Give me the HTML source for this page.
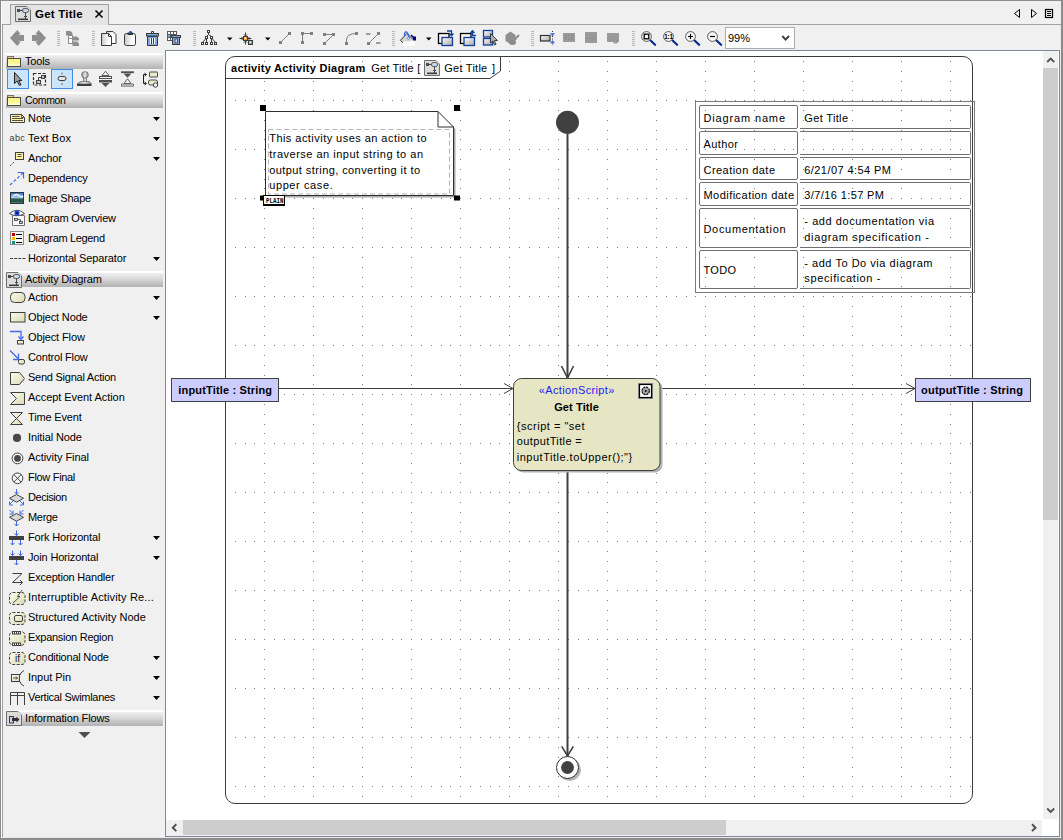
<!DOCTYPE html>
<html><head><meta charset="utf-8"><title>Get Title</title>
<style>
html,body{margin:0;padding:0;}
body{width:1063px;height:840px;overflow:hidden;background:#f0f0f0;position:relative;font-family:"Liberation Sans",sans-serif;font-size:11px;color:#000;}
.abs{position:absolute;}
.ui{font-family:"Liberation Sans",sans-serif;font-size:11px;}

.ph{position:absolute;left:6px;width:157px;height:16px;background:linear-gradient(#fff 0,#fff 2px,#efefef 2px,#dcdcdc 7px,#c4c4c4 12px,#b2b2b2 16px);}
.pt{position:absolute;font-size:11px;line-height:13px;white-space:nowrap;color:#000;}


.tabtxt{position:absolute;left:35px;top:8px;font-weight:bold;font-size:11.5px;letter-spacing:0.22px;line-height:13px;white-space:nowrap;}

</style></head><body>
<!-- window borders -->
<div class="abs" style="left:0;top:0;width:1063px;height:1px;background:#8e8e8e"></div>
<div class="abs" style="left:0;top:0;width:1px;height:840px;background:#8a8a8a"></div>
<div class="abs" style="left:1px;top:1px;width:1px;height:837px;background:#fbfbfb"></div>
<div class="abs" style="left:1061px;top:0;width:2px;height:840px;background:#8c8c8c"></div>
<div class="abs" style="left:0;top:838px;width:1063px;height:2px;background:#8c8c8c"></div>
<div class="abs" style="left:1px;top:837px;width:1060px;height:1px;background:#e8e8e8"></div>
<div class="abs" style="left:1060px;top:25px;width:1px;height:813px;background:#e8e8e8"></div>
<!-- tab content border -->
<div class="abs" style="left:2px;top:24px;width:1059px;height:1px;background:#a0a0a0"></div>
<div class="abs" style="left:2px;top:24px;width:1px;height:813px;background:#a0a0a0"></div>
<div class="abs" style="left:165px;top:836px;width:895px;height:1px;background:#7e8898"></div>
<div class="abs" style="left:1059px;top:50px;width:1px;height:787px;background:#7e8898"></div>

<div class="abs" style="left:10px;top:4px;width:99px;height:21px;background:#e5e5e5;border:1px solid #a0a0a0;border-bottom:none;box-sizing:border-box"></div>
<svg class="abs" style="left:0;top:0" width="1063" height="25" viewBox="0 0 1063 25">
<g transform="translate(15 6)">
<path d="M0.5 0.5H12L15.5 4V15.5H0.5Z" fill="#dcdcdc" stroke="#6e6e6e"/>
<path d="M12 0.5V4H15.5Z" fill="#fff" stroke="#b8b8b8" stroke-width="0.6"/>
<rect x="2" y="3" width="3" height="3" fill="#4a4a4a"/>
<path d="M5 4.5H8" stroke="#4a4a4a"/>
<rect x="7.5" y="2.5" width="6" height="4" rx="1.8" fill="#c8d6f0" stroke="#4a4a4a" stroke-width="0.9"/>
<path d="M10.5 6.5V13M9 10.5H12" stroke="#4a4a4a"/>
<rect x="3" y="12.5" width="10" height="1.6" fill="#3c3c3c"/>
</g>
<path d="M95.5 10.5L102.5 17.5M102.5 10.5L95.5 17.5" stroke="#000" stroke-width="1.5"/>
<path d="M1019.5 9.5V17.5L1014.5 13.5Z" fill="none" stroke="#000" stroke-width="1"/>
<path d="M1031.5 9.5V17.5L1036.5 13.5Z" fill="none" stroke="#000" stroke-width="1"/>
<rect x="1045.5" y="9.5" width="7" height="8" fill="none" stroke="#000" stroke-width="1.2"/>
<path d="M1047 11.5H1051M1047 13.5H1051M1047 15.5H1051" stroke="#000" stroke-width="1"/>
</svg>
<div class="tabtxt">Get Title</div>


<svg class="abs" style="left:0;top:0" width="1063" height="51" viewBox="0 0 1063 51">
<!-- back / forward -->
<path d="M10 38L17.3 30L20.5 34L19.3 35H24V41H19.3L20.5 42L17.3 46Z" fill="#8e8e8e"/><path d="M19 35.2L21.3 33.5M19 40.8L21.3 42.5" stroke="#d8d8d8" stroke-width="0.9"/>
<path d="M46 38L38.7 30L35.5 34L36.7 35H32V41H36.7L35.5 42L38.7 46Z" fill="#8e8e8e"/><path d="M37 35.2L34.7 33.5M37 40.8L34.7 42.5" stroke="#d8d8d8" stroke-width="0.9"/>
<rect x="57" y="31" width="3" height="1" fill="#b8b8b8"/><rect x="57" y="33" width="3" height="1" fill="#b8b8b8"/><rect x="57" y="35" width="3" height="1" fill="#b8b8b8"/><rect x="57" y="37" width="3" height="1" fill="#b8b8b8"/><rect x="57" y="39" width="3" height="1" fill="#b8b8b8"/><rect x="57" y="41" width="3" height="1" fill="#b8b8b8"/><rect x="57" y="43" width="3" height="1" fill="#b8b8b8"/><rect x="57" y="45" width="3" height="1" fill="#b8b8b8"/>
<!-- tree icon -->
<path d="M66 31H70.5L72.5 33V35.5H66ZM72.5 36.5H77L79 38.5V40.5H72.5ZM72.5 41.5H77L79 43.5V46H72.5Z" fill="#8e8e8e"/>
<rect x="68.5" y="35.5" width="4" height="8" fill="#fff" stroke="#8e8e8e"/>
<path d="M68.5 38.5H72.5" stroke="#8e8e8e"/>
<rect x="92" y="31" width="3" height="1" fill="#b8b8b8"/><rect x="92" y="33" width="3" height="1" fill="#b8b8b8"/><rect x="92" y="35" width="3" height="1" fill="#b8b8b8"/><rect x="92" y="37" width="3" height="1" fill="#b8b8b8"/><rect x="92" y="39" width="3" height="1" fill="#b8b8b8"/><rect x="92" y="41" width="3" height="1" fill="#b8b8b8"/><rect x="92" y="43" width="3" height="1" fill="#b8b8b8"/><rect x="92" y="45" width="3" height="1" fill="#b8b8b8"/>
<!-- copy -->
<defs><linearGradient id="pg" x1="0" x2="1"><stop offset="0" stop-color="#c8c8c8"/><stop offset="0.7" stop-color="#fff"/></linearGradient>
<linearGradient id="pg2" x1="0" x2="1" y1="0" y2="1"><stop offset="0" stop-color="#fff"/><stop offset="1" stop-color="#a8a8a8"/></linearGradient></defs>
<path d="M106.5 31.5H113L116 34.5V43.5H106.5Z" fill="url(#pg)" stroke="#3c3c3c"/>
<path d="M101.5 33.5H108.5L111.5 36.5V45.5H101.5Z" fill="url(#pg)" stroke="#3c3c3c"/>
<path d="M108.5 33.5V36.5H111.5" fill="none" stroke="#3c3c3c"/>
<!-- paste -->
<rect x="124.5" y="33.5" width="11" height="12" rx="2" fill="url(#pg)" stroke="#3c3c3c"/>
<rect x="127.5" y="32.6" width="5.5" height="2.4" fill="#303840"/><path d="M128.6 33L129.7 31H131.3L132.4 33Z" fill="#2a5ab4"/>
<!-- trash -->
<path d="M151.5 33V31.5H153.5V33" stroke="#3c3c3c" fill="none"/>
<rect x="146.5" y="33.5" width="12" height="2.5" fill="#7aa7e6" stroke="#3c3c3c"/>
<path d="M147.5 36.5H157.5V45.5H147.5Z" fill="#7aa7e6" stroke="#3c3c3c"/>
<path d="M150.5 38V44M152.5 38V44M154.5 38V44" stroke="#fff" stroke-width="1"/>
<path d="M151.5 38V44M153.5 38V44" stroke="#3c3c3c" stroke-width="1"/>
<!-- table trash -->
<rect x="167.5" y="31.5" width="9" height="9" fill="#fff" stroke="#5a5a5a"/>
<path d="M167.5 34.5H176.5M167.5 37.5H176.5M170.5 31.5V40.5M173.5 31.5V40.5" stroke="#5a5a5a"/>
<rect x="168" y="35" width="2" height="2" fill="#7aa7e6"/>
<rect x="171.5" y="35.5" width="9" height="2" fill="#7aa7e6" stroke="#3c3c3c"/>
<rect x="172.5" y="37.5" width="7" height="7" fill="#7aa7e6" stroke="#3c3c3c"/>
<rect x="175" y="39" width="2.5" height="4" fill="#d8d8e8" stroke="#3c3c3c" stroke-width="0.8"/>
<rect x="193" y="31" width="3" height="1" fill="#b8b8b8"/><rect x="193" y="33" width="3" height="1" fill="#b8b8b8"/><rect x="193" y="35" width="3" height="1" fill="#b8b8b8"/><rect x="193" y="37" width="3" height="1" fill="#b8b8b8"/><rect x="193" y="39" width="3" height="1" fill="#b8b8b8"/><rect x="193" y="41" width="3" height="1" fill="#b8b8b8"/><rect x="193" y="43" width="3" height="1" fill="#b8b8b8"/><rect x="193" y="45" width="3" height="1" fill="#b8b8b8"/>
<!-- layout tree -->
<g fill="#fff" stroke="#3c3c3c">
<path d="M208.5 33V34.5L206.5 36.5M208.5 34.5L211.5 36.5M206.5 39V42M211.5 39V42M205.5 39L202.5 42.5M212.5 39L215.5 42.5" fill="none"/>
<rect x="207.5" y="30.5" width="2" height="2"/>
<rect x="205.5" y="36.5" width="2" height="2"/><rect x="210.5" y="36.5" width="2" height="2"/>
<rect x="201.5" y="42.5" width="2" height="2"/><rect x="205.5" y="42.5" width="2" height="2"/><rect x="210.5" y="42.5" width="2" height="2"/><rect x="214.5" y="42.5" width="2" height="2"/>
</g>
<path d="M227 37.5H232.5L229.75 40.5Z" fill="#000"/>
<!-- quick diagram layout -->
<path d="M239.5 38.5H243M241.5 37L243 38.5L241.5 40M245.5 32.5V36M244 34.5L245.5 36L247 34.5M245.5 44.5V41M244 42.5L245.5 41L247 42.5M251.5 38.5H248M249.5 37L248 38.5L249.5 40" stroke="#3c3c3c" fill="none"/>
<rect x="243.5" y="36.5" width="4" height="4" fill="#f0a030" stroke="#3c3c3c"/>
<rect x="248.5" y="40.5" width="4" height="4" fill="#50c060" stroke="#3c3c3c"/>
<rect x="244.5" y="37.5" width="1.5" height="1.5" fill="#fff"/>
<rect x="249.5" y="41.5" width="1.5" height="1.5" fill="#fff"/>
<path d="M265 37.5H270.5L267.75 40.5Z" fill="#000"/>
<!-- path style icons (disabled) -->
<g stroke="#808080" fill="none" stroke-width="1">
<path d="M280.5 42.5L289.5 33.5"/>
<path d="M302.5 42.5V33.5H311.5"/>
<path d="M324.5 34.5H333.5L324.5 43.5"/>
<path d="M346.5 43.5V40Q346.5 33.5 356.5 33.5"/>
<path d="M368.5 43.5L378.5 33.5"/>
<path d="M366 34H370.5M376 43H380.5" stroke-width="1.5"/>
</g>
<rect x="279" y="41" width="3" height="3" fill="#808080"/><rect x="288" y="32" width="3" height="3" fill="#808080"/>
<rect x="301" y="32" width="3" height="3" fill="#808080"/><rect x="310" y="32" width="3" height="3" fill="#808080"/><rect x="301" y="41" width="3" height="3" fill="#808080"/>
<rect x="323" y="33" width="3" height="3" fill="#808080"/><rect x="332" y="33" width="3" height="3" fill="#808080"/><rect x="323" y="42" width="3" height="3" fill="#808080"/>
<rect x="355" y="32" width="3" height="3" fill="#808080"/><rect x="345" y="42" width="3" height="3" fill="#808080"/>
<rect x="377" y="32" width="3" height="3" fill="#808080"/><rect x="367" y="42" width="3" height="3" fill="#808080"/>
<rect x="392" y="31" width="3" height="1" fill="#b8b8b8"/><rect x="392" y="33" width="3" height="1" fill="#b8b8b8"/><rect x="392" y="35" width="3" height="1" fill="#b8b8b8"/><rect x="392" y="37" width="3" height="1" fill="#b8b8b8"/><rect x="392" y="39" width="3" height="1" fill="#b8b8b8"/><rect x="392" y="41" width="3" height="1" fill="#b8b8b8"/><rect x="392" y="43" width="3" height="1" fill="#b8b8b8"/><rect x="392" y="45" width="3" height="1" fill="#b8b8b8"/>
<!-- fill bucket -->
<path d="M400.5 40.5L407 33.5L413 39.5L408 42.5L403 43Z" fill="#d4d4d4"/>
<rect x="403" y="41.5" width="12" height="4.5" fill="#fff"/>
<path d="M403 42.8L400.4 40.3L407 33.4L413 39.5" stroke="#303030" fill="none"/>
<path d="M404.5 36V33.5Q405.8 30.3 407.5 33L408.5 35V37.5" stroke="#3a64e8" stroke-width="1.3" fill="none"/>
<rect x="407.7" y="37.3" width="1.8" height="1.8" fill="#fff" stroke="#3a64e8" stroke-width="0.8" transform="rotate(45 408.6 38.2)"/>
<path d="M411 35L414 38" stroke="#000080" stroke-width="1.6"/><rect x="413" y="36.5" width="3" height="4" fill="#000080"/>
<path d="M426 37.5H431.5L428.75 40.5Z" fill="#000"/>
<!-- send to back -->
<rect x="438.5" y="33.5" width="10.5" height="10" fill="#f4f4f4" stroke="#000" stroke-width="1.3"/>
<rect x="442" y="37.5" width="10.5" height="8" fill="url(#pg2)" stroke="#10409c" stroke-width="1.3"/>
<path d="M447 31H451.5V35.5M449.5 33.5L451.5 35.8L453.5 33.5" fill="none" stroke="#10409c" stroke-width="1.3"/>
<!-- bring to front -->
<rect x="460.5" y="33.5" width="10.5" height="10" fill="#f4f4f4" stroke="#000" stroke-width="1.3"/>
<rect x="464" y="37.5" width="10.5" height="8" fill="url(#pg2)" stroke="#10409c" stroke-width="1.3"/>
<path d="M476 35.5H472.5V31M470.5 33L472.5 30.7L474.5 33" fill="none" stroke="#10409c" stroke-width="1.3"/>
<!-- select all of type -->
<rect x="483.5" y="30.5" width="9" height="6.5" fill="url(#pg2)" stroke="#10409c" stroke-width="1.3"/>
<rect x="483.5" y="38.5" width="9" height="6.5" fill="url(#pg2)" stroke="#10409c" stroke-width="1.3"/>
<path d="M490.5 33.5V43L492.8 41L494.5 45L496 44.3L494.3 40.5H497.5Z" fill="#b0b0b0" stroke="#303030" stroke-width="0.9"/>
<!-- disabled paint -->
<path d="M505.5 35L510.5 31.5L515.5 35V41L510.5 44L505.5 41Z" fill="#909090"/>
<path d="M519 35L513 41.5" stroke="#909090" stroke-width="2"/>
<ellipse cx="512.5" cy="42.5" rx="3.5" ry="2.5" fill="#8a8a8a"/>
<rect x="531" y="31" width="3" height="1" fill="#b8b8b8"/><rect x="531" y="33" width="3" height="1" fill="#b8b8b8"/><rect x="531" y="35" width="3" height="1" fill="#b8b8b8"/><rect x="531" y="37" width="3" height="1" fill="#b8b8b8"/><rect x="531" y="39" width="3" height="1" fill="#b8b8b8"/><rect x="531" y="41" width="3" height="1" fill="#b8b8b8"/><rect x="531" y="43" width="3" height="1" fill="#b8b8b8"/><rect x="531" y="45" width="3" height="1" fill="#b8b8b8"/>
<!-- make same size -->
<rect x="540.5" y="35.5" width="9.5" height="5.5" fill="url(#pg2)" stroke="#303030" stroke-width="1.2"/>
<path d="M552.5 31V46" stroke="#303030" stroke-dasharray="1 1.5"/>
<path d="M550.5 33.5H554.5L552.5 36ZM550.5 43H554.5L552.5 40.5Z" fill="#3a6ee8" stroke="#3a6ee8" stroke-width="0.6"/>
<rect x="563" y="33" width="12" height="9" fill="#9a9a9a"/>
<path d="M565 35.5H573M565 37.5H573M565 39.5H573" stroke="#8a8a8a" stroke-dasharray="2 1"/>
<rect x="585" y="32" width="12" height="11" fill="#9a9a9a"/>
<path d="M586 38.5H596" stroke="#8e8e8e"/>
<rect x="607" y="33" width="12" height="9" fill="#9a9a9a"/>
<rect x="614" y="40" width="3" height="3" fill="#a8a8a8" stroke="#8a8a8a" stroke-width="0.8"/>
<rect x="632" y="31" width="3" height="1" fill="#b8b8b8"/><rect x="632" y="33" width="3" height="1" fill="#b8b8b8"/><rect x="632" y="35" width="3" height="1" fill="#b8b8b8"/><rect x="632" y="37" width="3" height="1" fill="#b8b8b8"/><rect x="632" y="39" width="3" height="1" fill="#b8b8b8"/><rect x="632" y="41" width="3" height="1" fill="#b8b8b8"/><rect x="632" y="43" width="3" height="1" fill="#b8b8b8"/><rect x="632" y="45" width="3" height="1" fill="#b8b8b8"/>
<!-- zoom icons -->
<path d="M650.3 40.3L655.1 44.8" stroke="#0a2a88" stroke-width="2.2" stroke-linecap="round"/>
<circle cx="646.5" cy="36.5" r="4.9" fill="#f6f6f6" stroke="#585858" stroke-width="1"/><rect x="644.2" y="34.2" width="4.6" height="4.6" fill="none" stroke="#000" stroke-width="1.3"/>
<path d="M672.3 40.3L677.1 44.8" stroke="#0a2a88" stroke-width="2.2" stroke-linecap="round"/>
<circle cx="668.5" cy="36.5" r="4.9" fill="#f6f6f6" stroke="#585858" stroke-width="1"/><text x="668.5" y="38.8" font-size="6.5" font-weight="bold" text-anchor="middle" font-family="Liberation Sans, sans-serif" letter-spacing="-0.3">1:1</text>
<path d="M694.3 40.3L699.1 44.8" stroke="#0a2a88" stroke-width="2.2" stroke-linecap="round"/>
<circle cx="690.5" cy="36.5" r="4.9" fill="#f6f6f6" stroke="#585858" stroke-width="1"/><path d="M688 36.5H693M690.5 34V39" stroke="#000" stroke-width="1.2"/>
<path d="M716.3 40.3L721.1 44.8" stroke="#0a2a88" stroke-width="2.2" stroke-linecap="round"/>
<circle cx="712.5" cy="36.5" r="4.9" fill="#f6f6f6" stroke="#585858" stroke-width="1"/><path d="M710 36.5H715" stroke="#000" stroke-width="1.2"/>
<!-- combo -->
<rect x="725.5" y="27.5" width="69" height="21" fill="#fff" stroke="#adadad"/>
<path d="M782.3 36L785.6 39.6L789 36" fill="none" stroke="#404040" stroke-width="2"/>
</svg>
<div class="abs ui" style="left:728px;top:32px;font-size:11px;line-height:13px">99%</div>

<div class="ph" style="top:53px"></div><div class="pt" style="left:25px;top:55px;letter-spacing:-0.198px">Tools</div><div class="ph" style="top:92px"></div><div class="pt" style="left:25px;top:94px;font-size:10.5px;letter-spacing:-0.330px">Common</div><div class="ph" style="top:271px"></div><div class="pt" style="left:25px;top:273px;letter-spacing:-0.173px">Activity Diagram</div><div class="ph" style="top:710px"></div><div class="pt" style="left:25px;top:712px;letter-spacing:-0.124px">Information Flows</div><div class="pt" style="left:28px;top:112px;letter-spacing:-0.062px">Note</div><div class="pt" style="left:28px;top:132px;letter-spacing:0.102px">Text Box</div><div class="pt" style="left:28px;top:152px;letter-spacing:-0.210px">Anchor</div><div class="pt" style="left:28px;top:172px;letter-spacing:-0.218px">Dependency</div><div class="pt" style="left:28px;top:192px;letter-spacing:-0.222px">Image Shape</div><div class="pt" style="left:28px;top:212px;letter-spacing:-0.161px">Diagram Overview</div><div class="pt" style="left:28px;top:232px;letter-spacing:-0.332px">Diagram Legend</div><div class="pt" style="left:28px;top:252px;letter-spacing:-0.135px">Horizontal Separator</div><div class="pt" style="left:28px;top:291px;letter-spacing:-0.163px">Action</div><div class="pt" style="left:28px;top:311px;letter-spacing:-0.141px">Object Node</div><div class="pt" style="left:28px;top:331px;letter-spacing:-0.125px">Object Flow</div><div class="pt" style="left:28px;top:351px;letter-spacing:-0.179px">Control Flow</div><div class="pt" style="left:28px;top:371px;letter-spacing:-0.248px">Send Signal Action</div><div class="pt" style="left:28px;top:391px;letter-spacing:-0.060px">Accept Event Action</div><div class="pt" style="left:28px;top:411px;letter-spacing:-0.163px">Time Event</div><div class="pt" style="left:28px;top:431px;letter-spacing:-0.096px">Initial Node</div><div class="pt" style="left:28px;top:451px;letter-spacing:-0.054px">Activity Final</div><div class="pt" style="left:28px;top:471px;letter-spacing:-0.312px">Flow Final</div><div class="pt" style="left:28px;top:491px;letter-spacing:-0.436px">Decision</div><div class="pt" style="left:28px;top:511px;letter-spacing:-0.317px">Merge</div><div class="pt" style="left:28px;top:531px;letter-spacing:-0.159px">Fork Horizontal</div><div class="pt" style="left:28px;top:551px;letter-spacing:-0.171px">Join Horizontal</div><div class="pt" style="left:28px;top:571px;letter-spacing:-0.199px">Exception Handler</div><div class="pt" style="left:28px;top:591px;letter-spacing:0.151px">Interruptible Activity Re...</div><div class="pt" style="left:28px;top:611px;letter-spacing:0.021px">Structured Activity Node</div><div class="pt" style="left:28px;top:631px;letter-spacing:-0.269px">Expansion Region</div><div class="pt" style="left:28px;top:651px;letter-spacing:-0.231px">Conditional Node</div><div class="pt" style="left:28px;top:671px;letter-spacing:-0.047px">Input Pin</div><div class="pt" style="left:28px;top:691px;letter-spacing:-0.296px">Vertical Swimlanes</div><svg class="abs" style="left:0;top:0" width="166" height="840" viewBox="0 0 166 840" font-family="Liberation Sans, sans-serif">
<defs><linearGradient id="fold" x1="0" y1="0" x2="0" y2="1"><stop offset="0" stop-color="#f8f27c"/><stop offset="0.5" stop-color="#faf690"/><stop offset="1" stop-color="#fffde4"/></linearGradient><linearGradient id="yf" x1="0" y1="0" x2="1" y2="1"><stop offset="0" stop-color="#fcfcf0"/><stop offset="1" stop-color="#dadab2"/></linearGradient></defs>
<rect x="7.5" y="69.5" width="21" height="19" fill="#cce4f7" stroke="#3c8ce8"/>
<rect x="51.5" y="69.5" width="21" height="19" fill="#cce4f7" stroke="#3c8ce8"/>
<path d="M14.5 72.5V83.5L17 81L19.5 85.5L21 84.7L18.7 80.5H21.8Z" fill="#a0a0a0" stroke="#202020" stroke-width="1"/>
<rect x="33.5" y="73.5" width="12" height="11.5" fill="none" stroke="#303030" stroke-width="1.2" stroke-dasharray="3 1.5"/>
<rect x="41.5" y="75.5" width="3" height="3" fill="#c8c8c8" stroke="#404040"/><rect x="36.5" y="80.5" width="4" height="3" fill="#c8c8c8" stroke="#404040"/><path d="M38.5 80.5V77.5H41.5" stroke="#404040" fill="none"/>
<path d="M62 72.5V85" stroke="#707070" stroke-dasharray="2 1.5"/>
<rect x="58" y="76.5" width="8" height="4" rx="2" fill="#e4e4e4" stroke="#404040"/>
<defs><linearGradient id="stg" x1="0" x2="1"><stop offset="0" stop-color="#8a8a8a"/><stop offset="0.5" stop-color="#e8e8e8"/><stop offset="1" stop-color="#8a8a8a"/></linearGradient></defs>
<rect x="83.3" y="76" width="3.4" height="6" fill="url(#stg)" stroke="#686868" stroke-width="0.5"/><rect x="81.8" y="71.8" width="6.4" height="6" rx="2.4" fill="url(#stg)" stroke="#585858" stroke-width="0.7"/><path d="M80.5 81.5H89.5L91.5 84H77L80.5 81.5Z" fill="url(#stg)" stroke="#585858" stroke-width="0.6"/>
<rect x="77" y="84" width="14.5" height="2" fill="#404040"/>
<rect x="99.5" y="76.5" width="12" height="2" fill="#f4f4f4" stroke="#505050"/><rect x="99.5" y="80.5" width="12" height="1.5" fill="#505050" stroke="#505050"/>
<path d="M105.5 71.2L102 75.5H109Z" fill="#f4f4f4" stroke="#505050" stroke-width="0.9"/><path d="M105.5 87L101.5 83H109.5Z" fill="#505050"/>
<rect x="121" y="71.3" width="13" height="1.8" fill="#505050"/><path d="M123.5 73.5H131.5L127.5 77.8Z" fill="#505050"/>
<path d="M127.5 78.8L124 83.5H131Z" fill="#f4f4f4" stroke="#505050" stroke-width="0.9"/><rect x="121.5" y="84" width="12" height="2.2" fill="#c8c8c8" stroke="#707070" stroke-width="0.8"/>
<rect x="149.5" y="72" width="8" height="5" rx="0.5" fill="#ecebc8" stroke="#484848"/><rect x="148.5" y="80" width="9" height="5" rx="2" fill="#ecebc8" stroke="#484848"/>
<path d="M146 74.5H143.5V83.5H146M144.5 73L146.5 74.5L144.5 76M144.5 82L146.5 83.5L144.5 85" stroke="#202020" fill="none"/>
<circle cx="155.5" cy="85" r="2.2" fill="#f4f4f4" stroke="#404040"/>
<path d="M78.5 732H90.5L84.5 738Z" fill="#505050"/><rect x="7.5" y="56.5" width="6" height="2.5" fill="#f6c878" stroke="#747474"/><rect x="7.5" y="58.5" width="13" height="8" fill="url(#fold)" stroke="#4c4c4c"/><rect x="7.5" y="95.5" width="6" height="2.5" fill="#f6c878" stroke="#747474"/><rect x="7.5" y="97.5" width="13" height="8" fill="url(#fold)" stroke="#4c4c4c"/><g transform="translate(6 272)">
<path d="M0.5 0.5H12L15.5 4V15.5H0.5Z" fill="#dcdcdc" stroke="#6e6e6e"/>
<path d="M12 0.5V4H15.5Z" fill="#fff" stroke="#b8b8b8" stroke-width="0.6"/>
<rect x="2" y="3" width="3" height="3" fill="#4a4a4a"/>
<path d="M5 4.5H8" stroke="#4a4a4a"/>
<rect x="7.5" y="2.5" width="6" height="4" rx="1.8" fill="#c8d6f0" stroke="#4a4a4a" stroke-width="0.9"/>
<path d="M10.5 6.5V13M9 10.5H12" stroke="#4a4a4a"/>
<rect x="3" y="12.5" width="10" height="1.6" fill="#3c3c3c"/>
</g><g transform="translate(6 711)">
<path d="M0.5 0.5H12L15.5 4V14.5H0.5Z" fill="#dcdcdc" stroke="#6e6e6e"/>
<path d="M12 0.5V4H15.5Z" fill="#fff" stroke="#b8b8b8" stroke-width="0.6"/>
<rect x="3.5" y="5.5" width="4" height="6.5" fill="#c4d2ee" stroke="#3c3c3c"/>
<path d="M6 7H10.5V5.5L13.5 8.5L10.5 11.5V10H6Z" fill="#303030"/>
</g><g transform="translate(0 108)"><path d="M10.5 6.5H21.5L24.5 9.5V14.5H10.5Z" fill="#fff3a8" stroke="#404040"/><path d="M21.5 6.5V9.5H24.5M12 8.5H19.5M12 10.5H23M12 12.5H23" stroke="#404040" fill="none" stroke-width="0.9"/></g><path d="M153 117H160L156.5 121Z" fill="#000"/><g transform="translate(0 128)"><text x="9.5" y="12.7" font-size="9" fill="#383838" letter-spacing="0.4">abc</text></g><path d="M153 137H160L156.5 141Z" fill="#000"/><g transform="translate(0 148)"><rect x="15.5" y="4.5" width="8" height="7" fill="#fff3a8" stroke="#404040"/><path d="M17.5 6.5H21.5M17.5 8.5H21.5" stroke="#404040" stroke-width="0.9"/><path d="M10 18L15 13" stroke="#404040" stroke-dasharray="2 1.5"/></g><path d="M153 157H160L156.5 161Z" fill="#000"/><g transform="translate(0 168)"><path d="M10 17L23.5 4.5" stroke="#4468e8" stroke-width="1.2" stroke-dasharray="3 2"/><path d="M17.5 4.5H23.5V10.5" stroke="#4468e8" stroke-width="1.2" fill="none"/></g><g transform="translate(0 188)"><defs><linearGradient id="sky" x1="0" y1="0" x2="0" y2="1"><stop offset="0" stop-color="#2a66c8"/><stop offset="0.45" stop-color="#a8d0f0"/><stop offset="0.6" stop-color="#2c5c50"/><stop offset="0.85" stop-color="#205038"/><stop offset="1" stop-color="#88b0e8"/></linearGradient></defs><rect x="10.5" y="4.5" width="13" height="11" fill="url(#sky)" stroke="#303030"/><path d="M13 8Q16 5.5 19 7.5T23 8" stroke="#fff" stroke-width="1.5" fill="none" opacity="0.85"/></g><g transform="translate(0 208)"><path d="M12.5 7.5H24.5V17.5H12.5Z" fill="#fafafa" stroke="#707070"/><rect x="14.5" y="10.5" width="3" height="2" fill="#e0e0e0" stroke="#303030" stroke-width="0.8"/><rect x="19.5" y="13.5" width="3" height="2" fill="#e0e0e0" stroke="#303030" stroke-width="0.8"/><path d="M17.5 11.5H20.5V13.5" stroke="#303030" fill="none" stroke-width="0.8"/><path d="M9.5 5.5Q17 -1 24.5 5.5Q17 10 9.5 5.5Z" fill="#fff" stroke="#505050"/><circle cx="17" cy="5" r="2.6" fill="#1848e0"/><circle cx="17" cy="5" r="1" fill="#101030"/></g><g transform="translate(0 228)"><rect x="10.5" y="3.5" width="13" height="13" fill="#f8f8f8" stroke="#8c8c8c"/><rect x="12" y="5" width="3" height="3" fill="#c00000"/><rect x="12" y="9" width="3" height="3" fill="#ffb400"/><rect x="12" y="13" width="3" height="3" fill="#109080"/><path d="M16 6.5H22M16 10.5H22M16 14.5H22" stroke="#000" stroke-width="1.1"/></g><g transform="translate(0 248)"><path d="M10 10.5H25.5" stroke="#404040" stroke-dasharray="3 1.15"/></g><path d="M153 257H160L156.5 261Z" fill="#000"/><g transform="translate(0 287)"><rect x="10.5" y="5.5" width="14.5" height="10" rx="4" fill="url(#yf)" stroke="#404040"/></g><path d="M153 296H160L156.5 300Z" fill="#000"/><g transform="translate(0 307)"><rect x="10.5" y="5.5" width="14.5" height="9.5" fill="url(#yf)" stroke="#404040"/></g><path d="M153 316H160L156.5 320Z" fill="#000"/><g transform="translate(0 327)"><path d="M10 4.5H21V12" stroke="#4468e8" stroke-width="1.3" fill="none"/><path d="M18.5 9.5L21 12.5L23.5 9.5" stroke="#4468e8" stroke-width="1.3" fill="none"/><rect x="17.5" y="13.5" width="6" height="3.5" fill="url(#yf)" stroke="#404040"/></g><g transform="translate(0 347)"><path d="M10 3.5L18.5 12" stroke="#4468e8" stroke-width="1.3" fill="none"/><path d="M18.5 6.5V12.5H13" stroke="#4468e8" stroke-width="1.3" fill="none"/><rect x="18.5" y="12.5" width="6" height="4.5" rx="1.5" fill="url(#yf)" stroke="#404040"/></g><g transform="translate(0 367)"><path d="M10.5 5.5H19.5L24.5 11.5L19.5 17.5H10.5Z" fill="url(#yf)" stroke="#404040"/></g><g transform="translate(0 387)"><path d="M10.5 5.5H24.5V17.5H10.5L16.5 11.5Z" fill="url(#yf)" stroke="#404040"/></g><g transform="translate(0 407)"><path d="M10.5 5.5H22.5L10.5 17.5H22.5Z" fill="url(#yf)" stroke="#404040"/></g><g transform="translate(0 427)"><circle cx="17" cy="10.9" r="4.1" fill="#484848"/></g><g transform="translate(0 447)"><circle cx="17.5" cy="11.4" r="5.4" fill="#fff" stroke="#404040"/><circle cx="17.5" cy="11.4" r="3.4" fill="#484848"/></g><g transform="translate(0 467)"><circle cx="17.5" cy="11.3" r="5.3" fill="#f8f8f8" stroke="#404040"/><path d="M13.8 7.6L21.2 15M21.2 7.6L13.8 15" stroke="#404040"/></g><g transform="translate(0 487)"><path d="M16.5 2V7M14.5 5L16.5 7L18.5 5" stroke="#4468e8" fill="none"/><path d="M9.5 11.3L16.5 7.5L23.5 11.3L16.5 15.2Z" fill="#d8d8d8" stroke="#404040"/><path d="M13 14L9.5 17.5M9.5 14.5V18H13M20 14L23.5 17.5M23.5 14.5V18H20" stroke="#4468e8" fill="none"/></g><g transform="translate(0 507)"><path d="M9.5 3L13 6.5M13 3.5V7H9.5M23.5 3L20 6.5M20 3.5V7H23.5" stroke="#4468e8" fill="none"/><path d="M9.5 10.3L16.5 6.5L23.5 10.3L16.5 14.2Z" fill="#d8d8d8" stroke="#404040"/><path d="M16.5 14V19M14.5 17L16.5 19L18.5 17" stroke="#4468e8" fill="none"/></g><g transform="translate(0 527)"><path d="M16.5 3.5V8.5M14.5 6.5L16.5 8.5L18.5 6.5" stroke="#4468e8" fill="none"/><rect x="9" y="9" width="15" height="4" fill="#404040"/><path d="M12.5 13V18M10.5 16L12.5 18L14.5 16" stroke="#4468e8" fill="none"/><path d="M20.5 13V18M18.5 16L20.5 18L22.5 16" stroke="#4468e8" fill="none"/></g><path d="M153 536H160L156.5 540Z" fill="#000"/><g transform="translate(0 547)"><path d="M12.5 3.5V8.5M10.5 6.5L12.5 8.5L14.5 6.5" stroke="#4468e8" fill="none"/><path d="M20.5 3.5V8.5M18.5 6.5L20.5 8.5L22.5 6.5" stroke="#4468e8" fill="none"/><rect x="9" y="9" width="15" height="4" fill="#404040"/><path d="M16.5 13V18M14.5 16L16.5 18L18.5 16" stroke="#4468e8" fill="none"/></g><path d="M153 556H160L156.5 560Z" fill="#000"/><g transform="translate(0 567)"><path d="M12.5 6.5H22L12.5 15.5H22.5M20 13L22.5 15.5L20 18" stroke="#404040" fill="none"/></g><g transform="translate(0 587)"><rect x="9.5" y="5.5" width="15.5" height="12" rx="3" fill="url(#yf)" stroke="#404040" stroke-dasharray="3 1.5"/><path d="M22 3L17.5 9.5H20L13 16" stroke="#404040" fill="none" stroke-width="0.9"/></g><g transform="translate(0 607)"><rect x="9.5" y="5.5" width="15.5" height="12" rx="3" fill="url(#yf)" stroke="#404040" stroke-dasharray="3 1.5"/><rect x="14.5" y="8.5" width="8" height="6" rx="1.5" fill="url(#yf)" stroke="#404040"/></g><g transform="translate(0 627)"><rect x="9.5" y="4.5" width="15.5" height="14" rx="4" fill="url(#yf)" stroke="#404040" stroke-dasharray="3 1.5"/><rect x="12.5" y="4.5" width="8" height="2.5" fill="#fff" stroke="#404040"/><rect x="12.5" y="16" width="8" height="2.5" fill="#fff" stroke="#404040"/><path d="M14.5 4.5V7M16.5 4.5V7M18.5 4.5V7M14.5 16V18.5M16.5 16V18.5M18.5 16V18.5" stroke="#404040"/></g><g transform="translate(0 647)"><rect x="9.5" y="5.5" width="15.5" height="12" rx="3" fill="url(#yf)" stroke="#404040" stroke-dasharray="3 1.5"/><text x="15" y="15" font-size="10" fill="#202020">if</text></g><path d="M153 656H160L156.5 660Z" fill="#000"/><g transform="translate(0 667)"><rect x="11.5" y="7.5" width="8" height="7" fill="url(#yf)" stroke="#404040"/><path d="M13 11H17.5M16 9.5L17.5 11L16 12.5" stroke="#404040" fill="none" stroke-width="0.9"/><path d="M24 3.5Q20 6 20 8M20 14.5Q20 17 24 19" stroke="#404040" fill="none"/></g><path d="M153 676H160L156.5 680Z" fill="#000"/><g transform="translate(0 687)"><path d="M10.5 18V5.5H24.5V18M17.5 5.5V18M10.5 8.5H24.5" stroke="#404040" fill="none"/></g><path d="M153 696H160L156.5 700Z" fill="#000"/></svg>
<!-- canvas -->
<div class="abs" style="left:165px;top:50px;width:894px;height:1px;background:#7e8898"></div>
<div class="abs" style="left:165px;top:50px;width:1px;height:786px;background:#7e8898"></div>
<div class="abs" style="left:166px;top:51px;width:893px;height:785px;background:#fff"></div>

<div class="abs" style="left:1043px;top:51px;width:15px;height:768px;background:#f0f0f0"></div>
<div class="abs" style="left:1043px;top:68px;width:15px;height:452px;background:#cdcdcd"></div>
<div class="abs" style="left:166px;top:820px;width:876px;height:16px;background:#f0f0f0"></div>
<div class="abs" style="left:183px;top:820px;width:543px;height:15px;background:#cdcdcd"></div>
<svg class="abs" style="left:0;top:0" width="1063" height="840" viewBox="0 0 1063 840">
<path d="M1047.2 62L1050.7 58.5L1054.2 62" fill="none" stroke="#505050" stroke-width="1.8"/>
<path d="M1047.2 808.5L1050.7 812L1054.2 808.5" fill="none" stroke="#505050" stroke-width="1.8"/>
<path d="M176.3 824.3L172.8 827.7L176.3 831.1" fill="none" stroke="#505050" stroke-width="2"/>
<path d="M1032 824.3L1035.5 827.7L1032 831.1" fill="none" stroke="#505050" stroke-width="2"/>
</svg>

<svg class="abs" style="left:0;top:0" width="1063" height="840" viewBox="0 0 1063 840" font-family="Liberation Sans, sans-serif" font-size="11">

<!-- frame -->
<rect x="225.5" y="56.5" width="747" height="747" rx="9.5" fill="#fff" stroke="#3c3c3c"/>
<path d="M225.5 78.5H490L500.5 71V56.5" fill="none" stroke="#3c3c3c"/>
<path d="M235 100.5h1M245 100.5h1M254 100.5h1M264 100.5h1M274 100.5h1M284 100.5h1M294 100.5h1M303 100.5h1M313 100.5h1M323 100.5h1M333 100.5h1M343 100.5h1M352 100.5h1M362 100.5h1M372 100.5h1M382 100.5h1M392 100.5h1M401 100.5h1M411 100.5h1M421 100.5h1M431 100.5h1M441 100.5h1M450 100.5h1M460 100.5h1M470 100.5h1M480 100.5h1M490 100.5h1M499 100.5h1M509 100.5h1M519 100.5h1M529 100.5h1M539 100.5h1M548 100.5h1M558 100.5h1M568 100.5h1M578 100.5h1M588 100.5h1M597 100.5h1M607 100.5h1M617 100.5h1M627 100.5h1M637 100.5h1M646 100.5h1M656 100.5h1M666 100.5h1M676 100.5h1M686 100.5h1M695 100.5h1M705 100.5h1M715 100.5h1M725 100.5h1M735 100.5h1M744 100.5h1M754 100.5h1M764 100.5h1M774 100.5h1M784 100.5h1M793 100.5h1M803 100.5h1M813 100.5h1M823 100.5h1M833 100.5h1M842 100.5h1M852 100.5h1M862 100.5h1M872 100.5h1M882 100.5h1M891 100.5h1M901 100.5h1M911 100.5h1M921 100.5h1M931 100.5h1M940 100.5h1M950 100.5h1M960 100.5h1M970 100.5h1M235 149.5h1M245 149.5h1M254 149.5h1M264 149.5h1M274 149.5h1M284 149.5h1M294 149.5h1M303 149.5h1M313 149.5h1M323 149.5h1M333 149.5h1M343 149.5h1M352 149.5h1M362 149.5h1M372 149.5h1M382 149.5h1M392 149.5h1M401 149.5h1M411 149.5h1M421 149.5h1M431 149.5h1M441 149.5h1M450 149.5h1M460 149.5h1M470 149.5h1M480 149.5h1M490 149.5h1M499 149.5h1M509 149.5h1M519 149.5h1M529 149.5h1M539 149.5h1M548 149.5h1M558 149.5h1M568 149.5h1M578 149.5h1M588 149.5h1M597 149.5h1M607 149.5h1M617 149.5h1M627 149.5h1M637 149.5h1M646 149.5h1M656 149.5h1M666 149.5h1M676 149.5h1M686 149.5h1M695 149.5h1M705 149.5h1M715 149.5h1M725 149.5h1M735 149.5h1M744 149.5h1M754 149.5h1M764 149.5h1M774 149.5h1M784 149.5h1M793 149.5h1M803 149.5h1M813 149.5h1M823 149.5h1M833 149.5h1M842 149.5h1M852 149.5h1M862 149.5h1M872 149.5h1M882 149.5h1M891 149.5h1M901 149.5h1M911 149.5h1M921 149.5h1M931 149.5h1M940 149.5h1M950 149.5h1M960 149.5h1M970 149.5h1M235 198.5h1M245 198.5h1M254 198.5h1M264 198.5h1M274 198.5h1M284 198.5h1M294 198.5h1M303 198.5h1M313 198.5h1M323 198.5h1M333 198.5h1M343 198.5h1M352 198.5h1M362 198.5h1M372 198.5h1M382 198.5h1M392 198.5h1M401 198.5h1M411 198.5h1M421 198.5h1M431 198.5h1M441 198.5h1M450 198.5h1M460 198.5h1M470 198.5h1M480 198.5h1M490 198.5h1M499 198.5h1M509 198.5h1M519 198.5h1M529 198.5h1M539 198.5h1M548 198.5h1M558 198.5h1M568 198.5h1M578 198.5h1M588 198.5h1M597 198.5h1M607 198.5h1M617 198.5h1M627 198.5h1M637 198.5h1M646 198.5h1M656 198.5h1M666 198.5h1M676 198.5h1M686 198.5h1M695 198.5h1M705 198.5h1M715 198.5h1M725 198.5h1M735 198.5h1M744 198.5h1M754 198.5h1M764 198.5h1M774 198.5h1M784 198.5h1M793 198.5h1M803 198.5h1M813 198.5h1M823 198.5h1M833 198.5h1M842 198.5h1M852 198.5h1M862 198.5h1M872 198.5h1M882 198.5h1M891 198.5h1M901 198.5h1M911 198.5h1M921 198.5h1M931 198.5h1M940 198.5h1M950 198.5h1M960 198.5h1M970 198.5h1M235 247.5h1M245 247.5h1M254 247.5h1M264 247.5h1M274 247.5h1M284 247.5h1M294 247.5h1M303 247.5h1M313 247.5h1M323 247.5h1M333 247.5h1M343 247.5h1M352 247.5h1M362 247.5h1M372 247.5h1M382 247.5h1M392 247.5h1M401 247.5h1M411 247.5h1M421 247.5h1M431 247.5h1M441 247.5h1M450 247.5h1M460 247.5h1M470 247.5h1M480 247.5h1M490 247.5h1M499 247.5h1M509 247.5h1M519 247.5h1M529 247.5h1M539 247.5h1M548 247.5h1M558 247.5h1M568 247.5h1M578 247.5h1M588 247.5h1M597 247.5h1M607 247.5h1M617 247.5h1M627 247.5h1M637 247.5h1M646 247.5h1M656 247.5h1M666 247.5h1M676 247.5h1M686 247.5h1M695 247.5h1M705 247.5h1M715 247.5h1M725 247.5h1M735 247.5h1M744 247.5h1M754 247.5h1M764 247.5h1M774 247.5h1M784 247.5h1M793 247.5h1M803 247.5h1M813 247.5h1M823 247.5h1M833 247.5h1M842 247.5h1M852 247.5h1M862 247.5h1M872 247.5h1M882 247.5h1M891 247.5h1M901 247.5h1M911 247.5h1M921 247.5h1M931 247.5h1M940 247.5h1M950 247.5h1M960 247.5h1M970 247.5h1M235 296.5h1M245 296.5h1M254 296.5h1M264 296.5h1M274 296.5h1M284 296.5h1M294 296.5h1M303 296.5h1M313 296.5h1M323 296.5h1M333 296.5h1M343 296.5h1M352 296.5h1M362 296.5h1M372 296.5h1M382 296.5h1M392 296.5h1M401 296.5h1M411 296.5h1M421 296.5h1M431 296.5h1M441 296.5h1M450 296.5h1M460 296.5h1M470 296.5h1M480 296.5h1M490 296.5h1M499 296.5h1M509 296.5h1M519 296.5h1M529 296.5h1M539 296.5h1M548 296.5h1M558 296.5h1M568 296.5h1M578 296.5h1M588 296.5h1M597 296.5h1M607 296.5h1M617 296.5h1M627 296.5h1M637 296.5h1M646 296.5h1M656 296.5h1M666 296.5h1M676 296.5h1M686 296.5h1M695 296.5h1M705 296.5h1M715 296.5h1M725 296.5h1M735 296.5h1M744 296.5h1M754 296.5h1M764 296.5h1M774 296.5h1M784 296.5h1M793 296.5h1M803 296.5h1M813 296.5h1M823 296.5h1M833 296.5h1M842 296.5h1M852 296.5h1M862 296.5h1M872 296.5h1M882 296.5h1M891 296.5h1M901 296.5h1M911 296.5h1M921 296.5h1M931 296.5h1M940 296.5h1M950 296.5h1M960 296.5h1M970 296.5h1M235 345.5h1M245 345.5h1M254 345.5h1M264 345.5h1M274 345.5h1M284 345.5h1M294 345.5h1M303 345.5h1M313 345.5h1M323 345.5h1M333 345.5h1M343 345.5h1M352 345.5h1M362 345.5h1M372 345.5h1M382 345.5h1M392 345.5h1M401 345.5h1M411 345.5h1M421 345.5h1M431 345.5h1M441 345.5h1M450 345.5h1M460 345.5h1M470 345.5h1M480 345.5h1M490 345.5h1M499 345.5h1M509 345.5h1M519 345.5h1M529 345.5h1M539 345.5h1M548 345.5h1M558 345.5h1M568 345.5h1M578 345.5h1M588 345.5h1M597 345.5h1M607 345.5h1M617 345.5h1M627 345.5h1M637 345.5h1M646 345.5h1M656 345.5h1M666 345.5h1M676 345.5h1M686 345.5h1M695 345.5h1M705 345.5h1M715 345.5h1M725 345.5h1M735 345.5h1M744 345.5h1M754 345.5h1M764 345.5h1M774 345.5h1M784 345.5h1M793 345.5h1M803 345.5h1M813 345.5h1M823 345.5h1M833 345.5h1M842 345.5h1M852 345.5h1M862 345.5h1M872 345.5h1M882 345.5h1M891 345.5h1M901 345.5h1M911 345.5h1M921 345.5h1M931 345.5h1M940 345.5h1M950 345.5h1M960 345.5h1M970 345.5h1M235 394.5h1M245 394.5h1M254 394.5h1M264 394.5h1M274 394.5h1M284 394.5h1M294 394.5h1M303 394.5h1M313 394.5h1M323 394.5h1M333 394.5h1M343 394.5h1M352 394.5h1M362 394.5h1M372 394.5h1M382 394.5h1M392 394.5h1M401 394.5h1M411 394.5h1M421 394.5h1M431 394.5h1M441 394.5h1M450 394.5h1M460 394.5h1M470 394.5h1M480 394.5h1M490 394.5h1M499 394.5h1M509 394.5h1M519 394.5h1M529 394.5h1M539 394.5h1M548 394.5h1M558 394.5h1M568 394.5h1M578 394.5h1M588 394.5h1M597 394.5h1M607 394.5h1M617 394.5h1M627 394.5h1M637 394.5h1M646 394.5h1M656 394.5h1M666 394.5h1M676 394.5h1M686 394.5h1M695 394.5h1M705 394.5h1M715 394.5h1M725 394.5h1M735 394.5h1M744 394.5h1M754 394.5h1M764 394.5h1M774 394.5h1M784 394.5h1M793 394.5h1M803 394.5h1M813 394.5h1M823 394.5h1M833 394.5h1M842 394.5h1M852 394.5h1M862 394.5h1M872 394.5h1M882 394.5h1M891 394.5h1M901 394.5h1M911 394.5h1M921 394.5h1M931 394.5h1M940 394.5h1M950 394.5h1M960 394.5h1M970 394.5h1M235 443.5h1M245 443.5h1M254 443.5h1M264 443.5h1M274 443.5h1M284 443.5h1M294 443.5h1M303 443.5h1M313 443.5h1M323 443.5h1M333 443.5h1M343 443.5h1M352 443.5h1M362 443.5h1M372 443.5h1M382 443.5h1M392 443.5h1M401 443.5h1M411 443.5h1M421 443.5h1M431 443.5h1M441 443.5h1M450 443.5h1M460 443.5h1M470 443.5h1M480 443.5h1M490 443.5h1M499 443.5h1M509 443.5h1M519 443.5h1M529 443.5h1M539 443.5h1M548 443.5h1M558 443.5h1M568 443.5h1M578 443.5h1M588 443.5h1M597 443.5h1M607 443.5h1M617 443.5h1M627 443.5h1M637 443.5h1M646 443.5h1M656 443.5h1M666 443.5h1M676 443.5h1M686 443.5h1M695 443.5h1M705 443.5h1M715 443.5h1M725 443.5h1M735 443.5h1M744 443.5h1M754 443.5h1M764 443.5h1M774 443.5h1M784 443.5h1M793 443.5h1M803 443.5h1M813 443.5h1M823 443.5h1M833 443.5h1M842 443.5h1M852 443.5h1M862 443.5h1M872 443.5h1M882 443.5h1M891 443.5h1M901 443.5h1M911 443.5h1M921 443.5h1M931 443.5h1M940 443.5h1M950 443.5h1M960 443.5h1M970 443.5h1M235 492.5h1M245 492.5h1M254 492.5h1M264 492.5h1M274 492.5h1M284 492.5h1M294 492.5h1M303 492.5h1M313 492.5h1M323 492.5h1M333 492.5h1M343 492.5h1M352 492.5h1M362 492.5h1M372 492.5h1M382 492.5h1M392 492.5h1M401 492.5h1M411 492.5h1M421 492.5h1M431 492.5h1M441 492.5h1M450 492.5h1M460 492.5h1M470 492.5h1M480 492.5h1M490 492.5h1M499 492.5h1M509 492.5h1M519 492.5h1M529 492.5h1M539 492.5h1M548 492.5h1M558 492.5h1M568 492.5h1M578 492.5h1M588 492.5h1M597 492.5h1M607 492.5h1M617 492.5h1M627 492.5h1M637 492.5h1M646 492.5h1M656 492.5h1M666 492.5h1M676 492.5h1M686 492.5h1M695 492.5h1M705 492.5h1M715 492.5h1M725 492.5h1M735 492.5h1M744 492.5h1M754 492.5h1M764 492.5h1M774 492.5h1M784 492.5h1M793 492.5h1M803 492.5h1M813 492.5h1M823 492.5h1M833 492.5h1M842 492.5h1M852 492.5h1M862 492.5h1M872 492.5h1M882 492.5h1M891 492.5h1M901 492.5h1M911 492.5h1M921 492.5h1M931 492.5h1M940 492.5h1M950 492.5h1M960 492.5h1M970 492.5h1M235 541.5h1M245 541.5h1M254 541.5h1M264 541.5h1M274 541.5h1M284 541.5h1M294 541.5h1M303 541.5h1M313 541.5h1M323 541.5h1M333 541.5h1M343 541.5h1M352 541.5h1M362 541.5h1M372 541.5h1M382 541.5h1M392 541.5h1M401 541.5h1M411 541.5h1M421 541.5h1M431 541.5h1M441 541.5h1M450 541.5h1M460 541.5h1M470 541.5h1M480 541.5h1M490 541.5h1M499 541.5h1M509 541.5h1M519 541.5h1M529 541.5h1M539 541.5h1M548 541.5h1M558 541.5h1M568 541.5h1M578 541.5h1M588 541.5h1M597 541.5h1M607 541.5h1M617 541.5h1M627 541.5h1M637 541.5h1M646 541.5h1M656 541.5h1M666 541.5h1M676 541.5h1M686 541.5h1M695 541.5h1M705 541.5h1M715 541.5h1M725 541.5h1M735 541.5h1M744 541.5h1M754 541.5h1M764 541.5h1M774 541.5h1M784 541.5h1M793 541.5h1M803 541.5h1M813 541.5h1M823 541.5h1M833 541.5h1M842 541.5h1M852 541.5h1M862 541.5h1M872 541.5h1M882 541.5h1M891 541.5h1M901 541.5h1M911 541.5h1M921 541.5h1M931 541.5h1M940 541.5h1M950 541.5h1M960 541.5h1M970 541.5h1M235 590.5h1M245 590.5h1M254 590.5h1M264 590.5h1M274 590.5h1M284 590.5h1M294 590.5h1M303 590.5h1M313 590.5h1M323 590.5h1M333 590.5h1M343 590.5h1M352 590.5h1M362 590.5h1M372 590.5h1M382 590.5h1M392 590.5h1M401 590.5h1M411 590.5h1M421 590.5h1M431 590.5h1M441 590.5h1M450 590.5h1M460 590.5h1M470 590.5h1M480 590.5h1M490 590.5h1M499 590.5h1M509 590.5h1M519 590.5h1M529 590.5h1M539 590.5h1M548 590.5h1M558 590.5h1M568 590.5h1M578 590.5h1M588 590.5h1M597 590.5h1M607 590.5h1M617 590.5h1M627 590.5h1M637 590.5h1M646 590.5h1M656 590.5h1M666 590.5h1M676 590.5h1M686 590.5h1M695 590.5h1M705 590.5h1M715 590.5h1M725 590.5h1M735 590.5h1M744 590.5h1M754 590.5h1M764 590.5h1M774 590.5h1M784 590.5h1M793 590.5h1M803 590.5h1M813 590.5h1M823 590.5h1M833 590.5h1M842 590.5h1M852 590.5h1M862 590.5h1M872 590.5h1M882 590.5h1M891 590.5h1M901 590.5h1M911 590.5h1M921 590.5h1M931 590.5h1M940 590.5h1M950 590.5h1M960 590.5h1M970 590.5h1M235 639.5h1M245 639.5h1M254 639.5h1M264 639.5h1M274 639.5h1M284 639.5h1M294 639.5h1M303 639.5h1M313 639.5h1M323 639.5h1M333 639.5h1M343 639.5h1M352 639.5h1M362 639.5h1M372 639.5h1M382 639.5h1M392 639.5h1M401 639.5h1M411 639.5h1M421 639.5h1M431 639.5h1M441 639.5h1M450 639.5h1M460 639.5h1M470 639.5h1M480 639.5h1M490 639.5h1M499 639.5h1M509 639.5h1M519 639.5h1M529 639.5h1M539 639.5h1M548 639.5h1M558 639.5h1M568 639.5h1M578 639.5h1M588 639.5h1M597 639.5h1M607 639.5h1M617 639.5h1M627 639.5h1M637 639.5h1M646 639.5h1M656 639.5h1M666 639.5h1M676 639.5h1M686 639.5h1M695 639.5h1M705 639.5h1M715 639.5h1M725 639.5h1M735 639.5h1M744 639.5h1M754 639.5h1M764 639.5h1M774 639.5h1M784 639.5h1M793 639.5h1M803 639.5h1M813 639.5h1M823 639.5h1M833 639.5h1M842 639.5h1M852 639.5h1M862 639.5h1M872 639.5h1M882 639.5h1M891 639.5h1M901 639.5h1M911 639.5h1M921 639.5h1M931 639.5h1M940 639.5h1M950 639.5h1M960 639.5h1M970 639.5h1M235 688.5h1M245 688.5h1M254 688.5h1M264 688.5h1M274 688.5h1M284 688.5h1M294 688.5h1M303 688.5h1M313 688.5h1M323 688.5h1M333 688.5h1M343 688.5h1M352 688.5h1M362 688.5h1M372 688.5h1M382 688.5h1M392 688.5h1M401 688.5h1M411 688.5h1M421 688.5h1M431 688.5h1M441 688.5h1M450 688.5h1M460 688.5h1M470 688.5h1M480 688.5h1M490 688.5h1M499 688.5h1M509 688.5h1M519 688.5h1M529 688.5h1M539 688.5h1M548 688.5h1M558 688.5h1M568 688.5h1M578 688.5h1M588 688.5h1M597 688.5h1M607 688.5h1M617 688.5h1M627 688.5h1M637 688.5h1M646 688.5h1M656 688.5h1M666 688.5h1M676 688.5h1M686 688.5h1M695 688.5h1M705 688.5h1M715 688.5h1M725 688.5h1M735 688.5h1M744 688.5h1M754 688.5h1M764 688.5h1M774 688.5h1M784 688.5h1M793 688.5h1M803 688.5h1M813 688.5h1M823 688.5h1M833 688.5h1M842 688.5h1M852 688.5h1M862 688.5h1M872 688.5h1M882 688.5h1M891 688.5h1M901 688.5h1M911 688.5h1M921 688.5h1M931 688.5h1M940 688.5h1M950 688.5h1M960 688.5h1M970 688.5h1M235 737.5h1M245 737.5h1M254 737.5h1M264 737.5h1M274 737.5h1M284 737.5h1M294 737.5h1M303 737.5h1M313 737.5h1M323 737.5h1M333 737.5h1M343 737.5h1M352 737.5h1M362 737.5h1M372 737.5h1M382 737.5h1M392 737.5h1M401 737.5h1M411 737.5h1M421 737.5h1M431 737.5h1M441 737.5h1M450 737.5h1M460 737.5h1M470 737.5h1M480 737.5h1M490 737.5h1M499 737.5h1M509 737.5h1M519 737.5h1M529 737.5h1M539 737.5h1M548 737.5h1M558 737.5h1M568 737.5h1M578 737.5h1M588 737.5h1M597 737.5h1M607 737.5h1M617 737.5h1M627 737.5h1M637 737.5h1M646 737.5h1M656 737.5h1M666 737.5h1M676 737.5h1M686 737.5h1M695 737.5h1M705 737.5h1M715 737.5h1M725 737.5h1M735 737.5h1M744 737.5h1M754 737.5h1M764 737.5h1M774 737.5h1M784 737.5h1M793 737.5h1M803 737.5h1M813 737.5h1M823 737.5h1M833 737.5h1M842 737.5h1M852 737.5h1M862 737.5h1M872 737.5h1M882 737.5h1M891 737.5h1M901 737.5h1M911 737.5h1M921 737.5h1M931 737.5h1M940 737.5h1M950 737.5h1M960 737.5h1M970 737.5h1M235 786.5h1M245 786.5h1M254 786.5h1M264 786.5h1M274 786.5h1M284 786.5h1M294 786.5h1M303 786.5h1M313 786.5h1M323 786.5h1M333 786.5h1M343 786.5h1M352 786.5h1M362 786.5h1M372 786.5h1M382 786.5h1M392 786.5h1M401 786.5h1M411 786.5h1M421 786.5h1M431 786.5h1M441 786.5h1M450 786.5h1M460 786.5h1M470 786.5h1M480 786.5h1M490 786.5h1M499 786.5h1M509 786.5h1M519 786.5h1M529 786.5h1M539 786.5h1M548 786.5h1M558 786.5h1M568 786.5h1M578 786.5h1M588 786.5h1M597 786.5h1M607 786.5h1M617 786.5h1M627 786.5h1M637 786.5h1M646 786.5h1M656 786.5h1M666 786.5h1M676 786.5h1M686 786.5h1M695 786.5h1M705 786.5h1M715 786.5h1M725 786.5h1M735 786.5h1M744 786.5h1M754 786.5h1M764 786.5h1M774 786.5h1M784 786.5h1M793 786.5h1M803 786.5h1M813 786.5h1M823 786.5h1M833 786.5h1M842 786.5h1M852 786.5h1M862 786.5h1M872 786.5h1M882 786.5h1M891 786.5h1M901 786.5h1M911 786.5h1M921 786.5h1M931 786.5h1M940 786.5h1M950 786.5h1M960 786.5h1M970 786.5h1M264 61.5h1M264 71.5h1M264 81.5h1M264 90.5h1M264 110.5h1M264 120.5h1M264 130.5h1M264 139.5h1M264 159.5h1M264 169.5h1M264 179.5h1M264 188.5h1M264 208.5h1M264 218.5h1M264 228.5h1M264 237.5h1M264 257.5h1M264 267.5h1M264 277.5h1M264 286.5h1M264 306.5h1M264 316.5h1M264 326.5h1M264 335.5h1M264 355.5h1M264 365.5h1M264 375.5h1M264 384.5h1M264 404.5h1M264 414.5h1M264 424.5h1M264 433.5h1M264 453.5h1M264 463.5h1M264 473.5h1M264 482.5h1M264 502.5h1M264 512.5h1M264 522.5h1M264 531.5h1M264 551.5h1M264 561.5h1M264 571.5h1M264 580.5h1M264 600.5h1M264 610.5h1M264 620.5h1M264 629.5h1M264 649.5h1M264 659.5h1M264 669.5h1M264 678.5h1M264 698.5h1M264 708.5h1M264 718.5h1M264 727.5h1M264 747.5h1M264 757.5h1M264 767.5h1M264 776.5h1M264 796.5h1M313 61.5h1M313 71.5h1M313 81.5h1M313 90.5h1M313 110.5h1M313 120.5h1M313 130.5h1M313 139.5h1M313 159.5h1M313 169.5h1M313 179.5h1M313 188.5h1M313 208.5h1M313 218.5h1M313 228.5h1M313 237.5h1M313 257.5h1M313 267.5h1M313 277.5h1M313 286.5h1M313 306.5h1M313 316.5h1M313 326.5h1M313 335.5h1M313 355.5h1M313 365.5h1M313 375.5h1M313 384.5h1M313 404.5h1M313 414.5h1M313 424.5h1M313 433.5h1M313 453.5h1M313 463.5h1M313 473.5h1M313 482.5h1M313 502.5h1M313 512.5h1M313 522.5h1M313 531.5h1M313 551.5h1M313 561.5h1M313 571.5h1M313 580.5h1M313 600.5h1M313 610.5h1M313 620.5h1M313 629.5h1M313 649.5h1M313 659.5h1M313 669.5h1M313 678.5h1M313 698.5h1M313 708.5h1M313 718.5h1M313 727.5h1M313 747.5h1M313 757.5h1M313 767.5h1M313 776.5h1M313 796.5h1M362 61.5h1M362 71.5h1M362 81.5h1M362 90.5h1M362 110.5h1M362 120.5h1M362 130.5h1M362 139.5h1M362 159.5h1M362 169.5h1M362 179.5h1M362 188.5h1M362 208.5h1M362 218.5h1M362 228.5h1M362 237.5h1M362 257.5h1M362 267.5h1M362 277.5h1M362 286.5h1M362 306.5h1M362 316.5h1M362 326.5h1M362 335.5h1M362 355.5h1M362 365.5h1M362 375.5h1M362 384.5h1M362 404.5h1M362 414.5h1M362 424.5h1M362 433.5h1M362 453.5h1M362 463.5h1M362 473.5h1M362 482.5h1M362 502.5h1M362 512.5h1M362 522.5h1M362 531.5h1M362 551.5h1M362 561.5h1M362 571.5h1M362 580.5h1M362 600.5h1M362 610.5h1M362 620.5h1M362 629.5h1M362 649.5h1M362 659.5h1M362 669.5h1M362 678.5h1M362 698.5h1M362 708.5h1M362 718.5h1M362 727.5h1M362 747.5h1M362 757.5h1M362 767.5h1M362 776.5h1M362 796.5h1M411 61.5h1M411 71.5h1M411 81.5h1M411 90.5h1M411 110.5h1M411 120.5h1M411 130.5h1M411 139.5h1M411 159.5h1M411 169.5h1M411 179.5h1M411 188.5h1M411 208.5h1M411 218.5h1M411 228.5h1M411 237.5h1M411 257.5h1M411 267.5h1M411 277.5h1M411 286.5h1M411 306.5h1M411 316.5h1M411 326.5h1M411 335.5h1M411 355.5h1M411 365.5h1M411 375.5h1M411 384.5h1M411 404.5h1M411 414.5h1M411 424.5h1M411 433.5h1M411 453.5h1M411 463.5h1M411 473.5h1M411 482.5h1M411 502.5h1M411 512.5h1M411 522.5h1M411 531.5h1M411 551.5h1M411 561.5h1M411 571.5h1M411 580.5h1M411 600.5h1M411 610.5h1M411 620.5h1M411 629.5h1M411 649.5h1M411 659.5h1M411 669.5h1M411 678.5h1M411 698.5h1M411 708.5h1M411 718.5h1M411 727.5h1M411 747.5h1M411 757.5h1M411 767.5h1M411 776.5h1M411 796.5h1M460 61.5h1M460 71.5h1M460 81.5h1M460 90.5h1M460 110.5h1M460 120.5h1M460 130.5h1M460 139.5h1M460 159.5h1M460 169.5h1M460 179.5h1M460 188.5h1M460 208.5h1M460 218.5h1M460 228.5h1M460 237.5h1M460 257.5h1M460 267.5h1M460 277.5h1M460 286.5h1M460 306.5h1M460 316.5h1M460 326.5h1M460 335.5h1M460 355.5h1M460 365.5h1M460 375.5h1M460 384.5h1M460 404.5h1M460 414.5h1M460 424.5h1M460 433.5h1M460 453.5h1M460 463.5h1M460 473.5h1M460 482.5h1M460 502.5h1M460 512.5h1M460 522.5h1M460 531.5h1M460 551.5h1M460 561.5h1M460 571.5h1M460 580.5h1M460 600.5h1M460 610.5h1M460 620.5h1M460 629.5h1M460 649.5h1M460 659.5h1M460 669.5h1M460 678.5h1M460 698.5h1M460 708.5h1M460 718.5h1M460 727.5h1M460 747.5h1M460 757.5h1M460 767.5h1M460 776.5h1M460 796.5h1M509 61.5h1M509 71.5h1M509 81.5h1M509 90.5h1M509 110.5h1M509 120.5h1M509 130.5h1M509 139.5h1M509 159.5h1M509 169.5h1M509 179.5h1M509 188.5h1M509 208.5h1M509 218.5h1M509 228.5h1M509 237.5h1M509 257.5h1M509 267.5h1M509 277.5h1M509 286.5h1M509 306.5h1M509 316.5h1M509 326.5h1M509 335.5h1M509 355.5h1M509 365.5h1M509 375.5h1M509 384.5h1M509 404.5h1M509 414.5h1M509 424.5h1M509 433.5h1M509 453.5h1M509 463.5h1M509 473.5h1M509 482.5h1M509 502.5h1M509 512.5h1M509 522.5h1M509 531.5h1M509 551.5h1M509 561.5h1M509 571.5h1M509 580.5h1M509 600.5h1M509 610.5h1M509 620.5h1M509 629.5h1M509 649.5h1M509 659.5h1M509 669.5h1M509 678.5h1M509 698.5h1M509 708.5h1M509 718.5h1M509 727.5h1M509 747.5h1M509 757.5h1M509 767.5h1M509 776.5h1M509 796.5h1M558 61.5h1M558 71.5h1M558 81.5h1M558 90.5h1M558 110.5h1M558 120.5h1M558 130.5h1M558 139.5h1M558 159.5h1M558 169.5h1M558 179.5h1M558 188.5h1M558 208.5h1M558 218.5h1M558 228.5h1M558 237.5h1M558 257.5h1M558 267.5h1M558 277.5h1M558 286.5h1M558 306.5h1M558 316.5h1M558 326.5h1M558 335.5h1M558 355.5h1M558 365.5h1M558 375.5h1M558 384.5h1M558 404.5h1M558 414.5h1M558 424.5h1M558 433.5h1M558 453.5h1M558 463.5h1M558 473.5h1M558 482.5h1M558 502.5h1M558 512.5h1M558 522.5h1M558 531.5h1M558 551.5h1M558 561.5h1M558 571.5h1M558 580.5h1M558 600.5h1M558 610.5h1M558 620.5h1M558 629.5h1M558 649.5h1M558 659.5h1M558 669.5h1M558 678.5h1M558 698.5h1M558 708.5h1M558 718.5h1M558 727.5h1M558 747.5h1M558 757.5h1M558 767.5h1M558 776.5h1M558 796.5h1M607 61.5h1M607 71.5h1M607 81.5h1M607 90.5h1M607 110.5h1M607 120.5h1M607 130.5h1M607 139.5h1M607 159.5h1M607 169.5h1M607 179.5h1M607 188.5h1M607 208.5h1M607 218.5h1M607 228.5h1M607 237.5h1M607 257.5h1M607 267.5h1M607 277.5h1M607 286.5h1M607 306.5h1M607 316.5h1M607 326.5h1M607 335.5h1M607 355.5h1M607 365.5h1M607 375.5h1M607 384.5h1M607 404.5h1M607 414.5h1M607 424.5h1M607 433.5h1M607 453.5h1M607 463.5h1M607 473.5h1M607 482.5h1M607 502.5h1M607 512.5h1M607 522.5h1M607 531.5h1M607 551.5h1M607 561.5h1M607 571.5h1M607 580.5h1M607 600.5h1M607 610.5h1M607 620.5h1M607 629.5h1M607 649.5h1M607 659.5h1M607 669.5h1M607 678.5h1M607 698.5h1M607 708.5h1M607 718.5h1M607 727.5h1M607 747.5h1M607 757.5h1M607 767.5h1M607 776.5h1M607 796.5h1M656 61.5h1M656 71.5h1M656 81.5h1M656 90.5h1M656 110.5h1M656 120.5h1M656 130.5h1M656 139.5h1M656 159.5h1M656 169.5h1M656 179.5h1M656 188.5h1M656 208.5h1M656 218.5h1M656 228.5h1M656 237.5h1M656 257.5h1M656 267.5h1M656 277.5h1M656 286.5h1M656 306.5h1M656 316.5h1M656 326.5h1M656 335.5h1M656 355.5h1M656 365.5h1M656 375.5h1M656 384.5h1M656 404.5h1M656 414.5h1M656 424.5h1M656 433.5h1M656 453.5h1M656 463.5h1M656 473.5h1M656 482.5h1M656 502.5h1M656 512.5h1M656 522.5h1M656 531.5h1M656 551.5h1M656 561.5h1M656 571.5h1M656 580.5h1M656 600.5h1M656 610.5h1M656 620.5h1M656 629.5h1M656 649.5h1M656 659.5h1M656 669.5h1M656 678.5h1M656 698.5h1M656 708.5h1M656 718.5h1M656 727.5h1M656 747.5h1M656 757.5h1M656 767.5h1M656 776.5h1M656 796.5h1M705 61.5h1M705 71.5h1M705 81.5h1M705 90.5h1M705 110.5h1M705 120.5h1M705 130.5h1M705 139.5h1M705 159.5h1M705 169.5h1M705 179.5h1M705 188.5h1M705 208.5h1M705 218.5h1M705 228.5h1M705 237.5h1M705 257.5h1M705 267.5h1M705 277.5h1M705 286.5h1M705 306.5h1M705 316.5h1M705 326.5h1M705 335.5h1M705 355.5h1M705 365.5h1M705 375.5h1M705 384.5h1M705 404.5h1M705 414.5h1M705 424.5h1M705 433.5h1M705 453.5h1M705 463.5h1M705 473.5h1M705 482.5h1M705 502.5h1M705 512.5h1M705 522.5h1M705 531.5h1M705 551.5h1M705 561.5h1M705 571.5h1M705 580.5h1M705 600.5h1M705 610.5h1M705 620.5h1M705 629.5h1M705 649.5h1M705 659.5h1M705 669.5h1M705 678.5h1M705 698.5h1M705 708.5h1M705 718.5h1M705 727.5h1M705 747.5h1M705 757.5h1M705 767.5h1M705 776.5h1M705 796.5h1M754 61.5h1M754 71.5h1M754 81.5h1M754 90.5h1M754 110.5h1M754 120.5h1M754 130.5h1M754 139.5h1M754 159.5h1M754 169.5h1M754 179.5h1M754 188.5h1M754 208.5h1M754 218.5h1M754 228.5h1M754 237.5h1M754 257.5h1M754 267.5h1M754 277.5h1M754 286.5h1M754 306.5h1M754 316.5h1M754 326.5h1M754 335.5h1M754 355.5h1M754 365.5h1M754 375.5h1M754 384.5h1M754 404.5h1M754 414.5h1M754 424.5h1M754 433.5h1M754 453.5h1M754 463.5h1M754 473.5h1M754 482.5h1M754 502.5h1M754 512.5h1M754 522.5h1M754 531.5h1M754 551.5h1M754 561.5h1M754 571.5h1M754 580.5h1M754 600.5h1M754 610.5h1M754 620.5h1M754 629.5h1M754 649.5h1M754 659.5h1M754 669.5h1M754 678.5h1M754 698.5h1M754 708.5h1M754 718.5h1M754 727.5h1M754 747.5h1M754 757.5h1M754 767.5h1M754 776.5h1M754 796.5h1M803 61.5h1M803 71.5h1M803 81.5h1M803 90.5h1M803 110.5h1M803 120.5h1M803 130.5h1M803 139.5h1M803 159.5h1M803 169.5h1M803 179.5h1M803 188.5h1M803 208.5h1M803 218.5h1M803 228.5h1M803 237.5h1M803 257.5h1M803 267.5h1M803 277.5h1M803 286.5h1M803 306.5h1M803 316.5h1M803 326.5h1M803 335.5h1M803 355.5h1M803 365.5h1M803 375.5h1M803 384.5h1M803 404.5h1M803 414.5h1M803 424.5h1M803 433.5h1M803 453.5h1M803 463.5h1M803 473.5h1M803 482.5h1M803 502.5h1M803 512.5h1M803 522.5h1M803 531.5h1M803 551.5h1M803 561.5h1M803 571.5h1M803 580.5h1M803 600.5h1M803 610.5h1M803 620.5h1M803 629.5h1M803 649.5h1M803 659.5h1M803 669.5h1M803 678.5h1M803 698.5h1M803 708.5h1M803 718.5h1M803 727.5h1M803 747.5h1M803 757.5h1M803 767.5h1M803 776.5h1M803 796.5h1M852 61.5h1M852 71.5h1M852 81.5h1M852 90.5h1M852 110.5h1M852 120.5h1M852 130.5h1M852 139.5h1M852 159.5h1M852 169.5h1M852 179.5h1M852 188.5h1M852 208.5h1M852 218.5h1M852 228.5h1M852 237.5h1M852 257.5h1M852 267.5h1M852 277.5h1M852 286.5h1M852 306.5h1M852 316.5h1M852 326.5h1M852 335.5h1M852 355.5h1M852 365.5h1M852 375.5h1M852 384.5h1M852 404.5h1M852 414.5h1M852 424.5h1M852 433.5h1M852 453.5h1M852 463.5h1M852 473.5h1M852 482.5h1M852 502.5h1M852 512.5h1M852 522.5h1M852 531.5h1M852 551.5h1M852 561.5h1M852 571.5h1M852 580.5h1M852 600.5h1M852 610.5h1M852 620.5h1M852 629.5h1M852 649.5h1M852 659.5h1M852 669.5h1M852 678.5h1M852 698.5h1M852 708.5h1M852 718.5h1M852 727.5h1M852 747.5h1M852 757.5h1M852 767.5h1M852 776.5h1M852 796.5h1M901 61.5h1M901 71.5h1M901 81.5h1M901 90.5h1M901 110.5h1M901 120.5h1M901 130.5h1M901 139.5h1M901 159.5h1M901 169.5h1M901 179.5h1M901 188.5h1M901 208.5h1M901 218.5h1M901 228.5h1M901 237.5h1M901 257.5h1M901 267.5h1M901 277.5h1M901 286.5h1M901 306.5h1M901 316.5h1M901 326.5h1M901 335.5h1M901 355.5h1M901 365.5h1M901 375.5h1M901 384.5h1M901 404.5h1M901 414.5h1M901 424.5h1M901 433.5h1M901 453.5h1M901 463.5h1M901 473.5h1M901 482.5h1M901 502.5h1M901 512.5h1M901 522.5h1M901 531.5h1M901 551.5h1M901 561.5h1M901 571.5h1M901 580.5h1M901 600.5h1M901 610.5h1M901 620.5h1M901 629.5h1M901 649.5h1M901 659.5h1M901 669.5h1M901 678.5h1M901 698.5h1M901 708.5h1M901 718.5h1M901 727.5h1M901 747.5h1M901 757.5h1M901 767.5h1M901 776.5h1M901 796.5h1M950 61.5h1M950 71.5h1M950 81.5h1M950 90.5h1M950 110.5h1M950 120.5h1M950 130.5h1M950 139.5h1M950 159.5h1M950 169.5h1M950 179.5h1M950 188.5h1M950 208.5h1M950 218.5h1M950 228.5h1M950 237.5h1M950 257.5h1M950 267.5h1M950 277.5h1M950 286.5h1M950 306.5h1M950 316.5h1M950 326.5h1M950 335.5h1M950 355.5h1M950 365.5h1M950 375.5h1M950 384.5h1M950 404.5h1M950 414.5h1M950 424.5h1M950 433.5h1M950 453.5h1M950 463.5h1M950 473.5h1M950 482.5h1M950 502.5h1M950 512.5h1M950 522.5h1M950 531.5h1M950 551.5h1M950 561.5h1M950 571.5h1M950 580.5h1M950 600.5h1M950 610.5h1M950 620.5h1M950 629.5h1M950 649.5h1M950 659.5h1M950 669.5h1M950 678.5h1M950 698.5h1M950 708.5h1M950 718.5h1M950 727.5h1M950 747.5h1M950 757.5h1M950 767.5h1M950 776.5h1M950 796.5h1" stroke="#7e7e7e" stroke-width="1" fill="none" shape-rendering="crispEdges"/>
<!-- flows -->
<path d="M567.5 122V378M567.5 470V756" stroke="#404040" stroke-width="2" fill="none"/>
<path d="M561.5 366L567.5 378L573.5 366M561.7 746.3L567.5 756L573.3 746.3" stroke="#404040" stroke-width="1.6" fill="none"/>
<path d="M278 388.5H513M660 388.5H915" stroke="#404040" fill="none"/>
<path d="M504 383.5L513 388.5L504 393.5M906 383.5L915 388.5L906 393.5" stroke="#404040" fill="none"/>
<!-- initial node -->
<circle cx="567.5" cy="122.3" r="11.5" fill="#404040"/>
<!-- final node -->
<circle cx="569.6" cy="769.6" r="11.3" fill="#b4b4b4"/>
<circle cx="567.5" cy="767.5" r="11" fill="#fff" stroke="#303030"/>
<circle cx="567.5" cy="767.5" r="6.4" fill="#404040"/>
<!-- note -->
<path d="M267.5 113.5H440L455.5 129V197.5H267.5Z" fill="#a8a8a8"/>
<path d="M265.5 111.5H438L453.5 127V195.5H265.5Z" fill="#fff" stroke="#303030"/>
<path d="M438 111.5V127H453.5" fill="none" stroke="#303030"/>
<rect x="268.5" y="129.5" width="181" height="64.5" fill="none" stroke="#b4b4b4" stroke-dasharray="5 3"/>
<text x="269.2" y="141.8" textLength="157.4" lengthAdjust="spacing" >This activity uses an action to</text>
<text x="269.2" y="157.8" textLength="153.8" lengthAdjust="spacing" >traverse an input string to an</text>
<text x="269.2" y="173.8" textLength="150.8" lengthAdjust="spacing" >output string, converting it to</text>
<text x="269.2" y="189.2" textLength="63.5" lengthAdjust="spacing" >upper case.</text>
<rect x="260" y="105" width="6" height="6" fill="#000"/>
<rect x="454" y="105" width="6" height="6" fill="#000"/>
<rect x="260" y="195.5" width="6" height="5" fill="#000"/>
<rect x="454" y="195.5" width="6" height="5" fill="#000"/>
<rect x="263.5" y="195.5" width="21" height="9" fill="#fff" stroke="#000"/>
<rect x="263" y="204" width="22" height="2" fill="#000"/>
<text x="266" y="203.3" font-size="8" font-weight="bold" textLength="17.5" lengthAdjust="spacingAndGlyphs" style="font-family:'Liberation Mono','DejaVu Sans Mono',monospace">PLAIN</text>
<!-- info table -->
<rect x="695.5" y="101.5" width="279" height="191" fill="none" stroke="#7a7a7a"/>
<g fill="none" stroke="#6e6e6e"><rect x="699.5" y="105.5" width="98" height="23.0" rx="1.5"/><path d="M800 105.5H969.5Q970.5 105.5 970.5 106.5V127.5Q970.5 128.5 969.5 128.5H800"/><rect x="699.5" y="131.5" width="98" height="23.0" rx="1.5"/><path d="M800 131.5H969.5Q970.5 131.5 970.5 132.5V153.5Q970.5 154.5 969.5 154.5H800"/><rect x="699.5" y="157.5" width="98" height="22.0" rx="1.5"/><path d="M800 157.5H969.5Q970.5 157.5 970.5 158.5V178.5Q970.5 179.5 969.5 179.5H800"/><rect x="699.5" y="182.5" width="98" height="23.0" rx="1.5"/><path d="M800 182.5H969.5Q970.5 182.5 970.5 183.5V204.5Q970.5 205.5 969.5 205.5H800"/><rect x="699.5" y="208.5" width="98" height="39.0" rx="1.5"/><path d="M800 208.5H969.5Q970.5 208.5 970.5 209.5V246.5Q970.5 247.5 969.5 247.5H800"/><rect x="699.5" y="250.5" width="98" height="38.0" rx="1.5"/><path d="M800 250.5H969.5Q970.5 250.5 970.5 251.5V287.5Q970.5 288.5 969.5 288.5H800"/></g>
<text x="703.5" y="121.6" textLength="81.5" lengthAdjust="spacing" >Diagram name</text>
<text x="703.5" y="148" textLength="34.5" lengthAdjust="spacing" >Author</text>
<text x="703.5" y="173.6" textLength="71.5" lengthAdjust="spacing" >Creation date</text>
<text x="703.5" y="198.8" textLength="90.5" lengthAdjust="spacing" >Modification date</text>
<text x="703.5" y="232.5" textLength="82.1" lengthAdjust="spacing" >Documentation</text>
<text x="703.5" y="274" textLength="32.5" lengthAdjust="spacing" >TODO</text>
<text x="804.3" y="121.6" textLength="43.7" lengthAdjust="spacing" >Get Title</text>
<text x="804.3" y="173.6" textLength="86.7" lengthAdjust="spacing" >6/21/07 4:54 PM</text>
<text x="804.3" y="198.8" textLength="79.7" lengthAdjust="spacing" >3/7/16 1:57 PM</text>
<text x="804.3" y="224.7" textLength="129.7" lengthAdjust="spacing" >- add documentation via</text>
<text x="804.3" y="240.5" textLength="124.5" lengthAdjust="spacing" >diagram specification -</text>
<text x="804.3" y="266.5" textLength="128.2" lengthAdjust="spacing" >- add To Do via diagram</text>
<text x="804.3" y="282.2" textLength="76.1" lengthAdjust="spacing" >specification -</text>
<!-- action -->
<rect x="515.5" y="380.5" width="147" height="92" rx="8" fill="#b2b2b2"/>
<rect x="513.5" y="378.5" width="146.5" height="92" rx="8" fill="#e6e6c4" stroke="#404040"/>
<text x="538.8" y="393.8" textLength="75.5" lengthAdjust="spacing" fill="#1c1cf0">«ActionScript»</text>
<text x="554.2" y="411" textLength="44.7" lengthAdjust="spacing" font-weight="bold">Get Title</text>
<text x="516.8" y="429.8" textLength="67.7" lengthAdjust="spacing" >{script = "set</text>
<text x="516.8" y="445" textLength="65.0" lengthAdjust="spacing" >outputTitle =</text>
<text x="516.8" y="460.6" textLength="115.4" lengthAdjust="spacing" >inputTitle.toUpper();"}</text>
<rect x="638.5" y="383.5" width="14" height="15" fill="none" stroke="#8c8c8c"/><rect x="639.5" y="384.5" width="12" height="13" fill="#fff" stroke="#000" stroke-width="1.2"/>
<circle cx="645.7" cy="390.9" r="3.7" fill="#a8a8a8" stroke="#101010" stroke-width="1.3" stroke-dasharray="2.2 0.7"/>
<rect x="644.9" y="390.1" width="1.7" height="1.7" fill="#000"/>
<!-- pins -->
<rect x="171.5" y="378.5" width="107" height="23" fill="#ccccff" stroke="#404040"/>
<text x="178.3" y="393.9" font-weight="bold" textLength="93.7" lengthAdjust="spacing">inputTitle : String</text>
<rect x="915.5" y="378.5" width="115" height="23" fill="#ccccff" stroke="#404040"/>
<text x="921.1" y="393.9" font-weight="bold" textLength="101.8" lengthAdjust="spacing">outputTitle : String</text>
<!-- frame header text -->
<text x="231" y="72" font-weight="bold" textLength="134.2" lengthAdjust="spacing">activity Activity Diagram</text>
<text x="371.3" y="72" textLength="48.9" lengthAdjust="spacing">Get Title [</text>
<g transform="translate(424 60)">
<path d="M0.5 0.5H12L15.5 4V15.5H0.5Z" fill="#dcdcdc" stroke="#6e6e6e"/>
<path d="M12 0.5V4H15.5Z" fill="#fff" stroke="#b8b8b8" stroke-width="0.6"/>
<rect x="2" y="3" width="3" height="3" fill="#4a4a4a"/>
<path d="M5 4.5H8" stroke="#4a4a4a"/>
<rect x="7.5" y="2.5" width="6" height="4" rx="1.8" fill="#c8d6f0" stroke="#4a4a4a" stroke-width="0.9"/>
<path d="M10.5 6.5V13M9 10.5H12" stroke="#4a4a4a"/>
<rect x="3" y="12.5" width="10" height="1.6" fill="#3c3c3c"/>
</g>
<text x="444.3" y="72" textLength="42.9" lengthAdjust="spacing">Get Title</text>
<text x="492" y="72">]</text>

</svg>
</body></html>
